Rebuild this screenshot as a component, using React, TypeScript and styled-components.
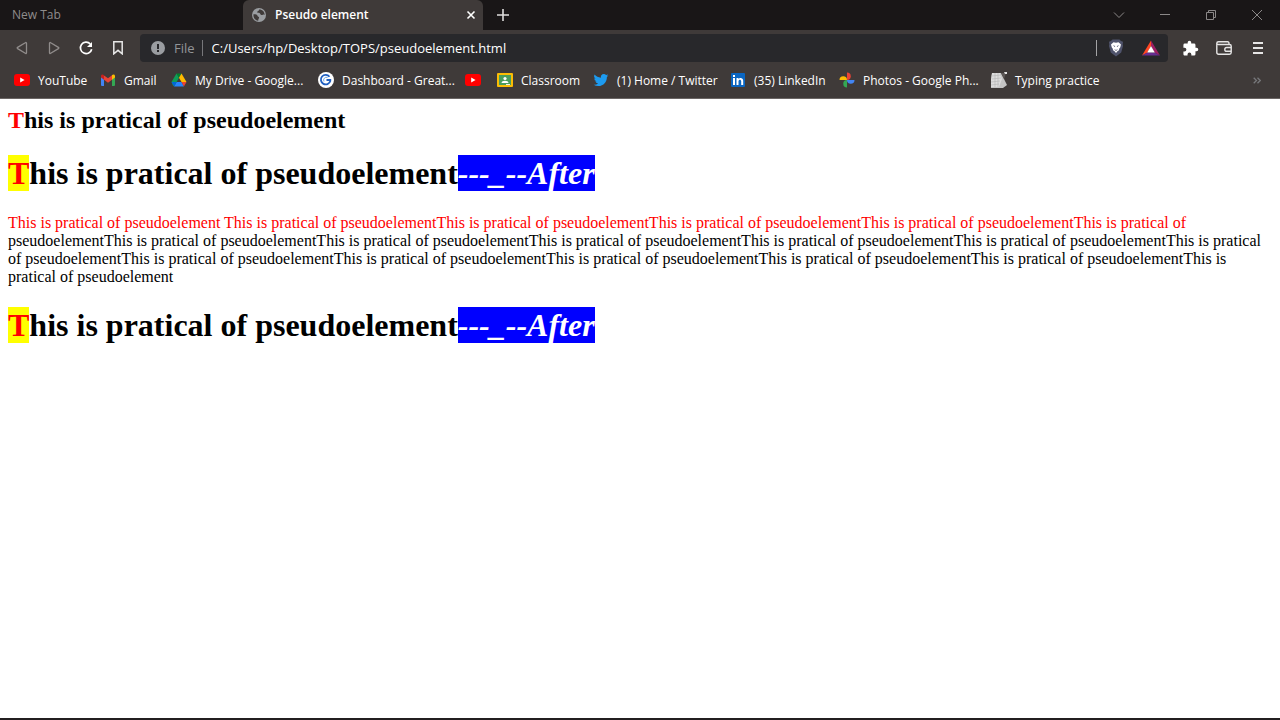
import React from "react";
import styled, { createGlobalStyle } from "styled-components";

const GlobalStyle = createGlobalStyle`
  *, *::before, *::after { box-sizing: border-box; }
  body { margin: 0; background: #fff; }
`;

const UI_FONT = `"Segoe UI", "Open Sans", "Noto Sans", sans-serif`;

const Window = styled.div`
  display: flex;
  flex-direction: column;
  min-height: 100vh;
`;

const BrowserChrome = styled.header`
  font-family: ${UI_FONT};
  font-size: 12px;
  color: #fff;
  background: #3f3a39;
  border-bottom: 1px solid #6b6665;
`;

const IconButton = styled.button<{ $width: number }>`
  display: flex;
  align-items: center;
  justify-content: center;
  flex: none;
  width: ${(p) => p.$width}px;
  height: 28px;
  padding: 0;
  border: 0;
  background: none;
  color: inherit;
`;

const TabStrip = styled.div`
  display: flex;
  align-items: center;
  height: 30px;
  background: #191617;
`;

const Tab = styled.div<{ $active?: boolean }>`
  display: flex;
  align-items: center;
  gap: 8px;
  flex: 0 1 ${(p) => (p.$active ? 240 : 243)}px;
  height: 30px;
  padding: 0 0 0 ${(p) => (p.$active ? 8 : 12)}px;
  border-radius: 6px 6px 0 0;
  background: ${(p) => (p.$active ? "#3f3a39" : "transparent")};
  color: ${(p) => (p.$active ? "#fff" : "#8f8c8c")};
  font-weight: ${(p) => (p.$active ? 600 : 400)};
  white-space: nowrap;
`;

const TabTitle = styled.span`
  flex: 1;
  padding-bottom: 1px;
`;

const WindowControls = styled.div`
  display: flex;
  margin-left: auto;
  color: #8b8888;
`;

const Toolbar = styled.div`
  display: flex;
  align-items: center;
  height: 36px;
  padding: 0 5px 0 6px;
`;

const NavButtons = styled.div`
  display: flex;
  flex: none;
  margin-right: 6px;
`;

const AddressBar = styled.div`
  display: flex;
  align-items: center;
  flex: 1;
  height: 28px;
  padding-left: 10px;
  border-radius: 4px;
  background: #28282b;
`;

const Scheme = styled.span`
  margin-left: 8px;
  padding-right: 7px;
  border-right: 1px solid #77777a;
  color: #929598;
  font-size: 13px;
  line-height: 16px;
`;

const AddressInput = styled.input`
  flex: 1;
  min-width: 0;
  padding: 0 9px;
  border: 0;
  outline: 0;
  background: none;
  color: #fff;
  font-family: inherit;
  font-size: 13px;
`;

const Divider = styled.span`
  width: 1px;
  height: 16px;
  margin-right: 2px;
  background: #a3a3a5;
`;

const Extensions = styled.div`
  display: flex;
  flex: none;
  margin-left: 5px;
  color: #e6e5e5;
`;

const BookmarkBar = styled.nav`
  display: flex;
  align-items: center;
  gap: 16px;
  height: 32px;
  padding: 0 6px 4px 14px;
`;

const Bookmark = styled.a`
  display: flex;
  align-items: center;
  flex: none;
  gap: 8px;
  color: inherit;
  text-decoration: none;
  white-space: nowrap;
`;

const BookmarkLabel = styled.span<{ $width: number }>`
  width: ${(p) => p.$width}px;
`;

const Overflow = styled.div`
  margin-left: auto;
  color: #77787b;
`;

const Document = styled.main`
  flex: 1;
  padding: 8px;
  color: #000;
  font-family: "Times New Roman", "Liberation Serif", serif;
  font-size: 16px;
  line-height: 18px;
`;

const SubHeading = styled.h2`
  margin: 0;
  font-size: 24px;
  line-height: 27px;
  &::first-letter { color: #f00; }
`;

const Heading = styled.h1`
  margin: 21px 0;
  font-size: 32px;
  line-height: 37px;
  &::first-letter { color: #f00; background: #ff0; }
`;

const After = styled.em`
  color: #fff;
  background: #00f;
`;

const Paragraph = styled.p`
  margin: 22px 0 21px;
  &::first-line { color: #f00; }
`;

const BottomEdge = styled.footer`
  height: 2px;
  background: #231f20;
`;

const YouTubeIcon = () => (
  <svg width="16" height="16" viewBox="0 0 16 16">
    <rect y="2" width="16" height="12" rx="3" fill="#f00" />
    <path d="M6.2 5.5v5L10.6 8z" fill="#fff" />
  </svg>
);

const GmailIcon = () => (
  <svg width="16" height="16" viewBox="0 0 16 16">
    <path d="M1 4v9a1 1 0 0 0 1 1h2V6.5z" fill="#4285f4" />
    <path d="M15 4v9a1 1 0 0 1-1 1h-2V6.5z" fill="#34a853" />
    <path d="M12 3.6V7.7l3-2.2V4c0-1.6-1.7-2.2-3-.9z" fill="#fbbc04" />
    <path d="M4 3.4v4.3l4 3 4-3V3.3L8 6.3z" fill="#ea4335" />
    <path d="M1 4v1.5l3 2.2V3.2C2.700 2 1 2.500 1 4z" fill="#c5221f" />
  </svg>
);

const DriveIcon = () => (
  <svg width="16" height="16" viewBox="0 0 16 16">
    <path d="M5.500 1.500 8 5.800 3.100 14.500 1.600 13 .5 10z" fill="#0f9d58" />
    <path d="M5.500 1.500h5L8 5.800z" fill="#00832d" />
    <path d="M10.500 1.500 15.500 10h-5L8 5.800z" fill="#ffba00" />
    <path d="M5.600 10h4.900l2.400 4.500H3.100z" fill="#2684fc" />
    <path d="M.5 10h5.100l-2.500 4.500z" fill="#0066da" />
    <path d="M10.500 10h5l-2.600 4.500z" fill="#ea4335" />
  </svg>
);

const GreatIcon = () => (
  <svg width="16" height="16" viewBox="0 0 16 16">
    <circle cx="8" cy="8" r="8" fill="#fff" />
    <path d="M11.500 4.700A4.800 4.800 0 1 0 12.300 9V8H8.500" fill="none" stroke="#1f5fc0" strokeWidth="1.800" />
    <path d="M9.500 5.500A2.800 2.800 0 0 0 6 9.500" fill="none" stroke="#6aa5e8" />
  </svg>
);

const ClassroomIcon = () => (
  <svg width="16" height="16" viewBox="0 0 16 16">
    <rect y="1" width="16" height="14" rx="1" fill="#fbbc04" />
    <rect x="2" y="3" width="12" height="10" fill="#4a9c5c" />
    <circle cx="8" cy="6.500" r="1.600" fill="#fff" />
    <path d="M4.500 11c0-3 7-3 7 0z" fill="#fff" />
    <path d="M9 12h4v1H9z" fill="#e8f1e9" />
  </svg>
);

const TwitterIcon = () => (
  <svg width="16" height="16" viewBox="-1 -1 26 26" fill="#1d9bf0">
    <path d="M23.950 4.570a10 10 0 0 1-2.820.770 4.960 4.960 0 0 0 2.160-2.720c-.950.550-2 .950-3.130 1.180a4.920 4.920 0 0 0-8.380 4.480C7.690 8.090 4.070 6.130 1.640 3.160a4.900 4.900 0 0 0 1.520 6.570 4.900 4.900 0 0 1-2.230-.610v.060a4.920 4.920 0 0 0 3.950 4.830 5 5 0 0 1-2.210.080 4.940 4.940 0 0 0 4.600 3.420A9.870 9.870 0 0 1 0 19.540a14 14 0 0 0 7.550 2.210c9.050 0 14-7.500 14-13.980l-.020-.640a9.900 9.900 0 0 0 2.420-2.560z" />
  </svg>
);

const LinkedInIcon = () => (
  <svg width="16" height="16" viewBox="0 0 16 16">
    <rect x="1" y="1" width="14" height="14" rx="1" fill="#0a66c2" />
    <path d="M3 6h2v7H3zM3 3h2v2H3zM6.500 6h2v1c1-1.700 4.700-1.700 4.700 1.800V13h-2V9.300c0-2.200-2.700-2.200-2.700 0V13h-2z" fill="#fff" />
  </svg>
);

const PhotosIcon = () => (
  <svg width="16" height="16" viewBox="0 0 16 16">
    <path d="M8 8V.5A3.750 3.750 0 0 1 8 8z" fill="#ea4335" />
    <path d="M8 8H.5A3.750 3.750 0 0 1 8 8z" fill="#fbbc04" />
    <path d="M8 8h7.500A3.750 3.750 0 0 1 8 8z" fill="#4285f4" />
    <path d="M8 8v7.500A3.750 3.750 0 0 1 8 8z" fill="#34a853" />
  </svg>
);

const TypingIcon = () => (
  <svg width="16" height="16" viewBox="0 0 16 16">
    <path d="M1 1h9l4 8 2 4-4 3H0V8z" fill="#c4c4c4" />
    <path d="M1 1h8l2 6-3 8H0V8z" fill="#dcdcdc" />
    <path d="M1 4l9-1M1 7l9-1M0 10l9-1M0 13l8-1M4 1v14M7 1v14" stroke="#b4b4b4" strokeWidth=".6" />
    <path d="M10 1l5 0-2 6z" fill="#5d5857" />
    <path d="M13 0h3v2h-2z" fill="#e4e4e4" />
  </svg>
);

const GlobeIcon = () => (
  <svg width="16" height="16" viewBox="0 0 16 16">
    <circle cx="8" cy="8" r="7" fill="#9a9da1" />
    <path d="M2.500 7.200c2 0 3.600.3 4 1.500.4 1.400 1.600.7 1.600 1.800 0 1-.9 1.200-.9 3.300C4 13.500 2 10.500 2.500 7.200zM8.200 2.500c-.2 1.700-2.200 1.300-2 2.800.1 1 2.600.2 3 1.500.3 1.200 1.700 1.500 2.600 1 .8-.5 1.400-.3 1.800.200.1-2.800-1.700-5-4.300-5.500z" fill="#3f3a39" />
  </svg>
);

const InfoIcon = () => (
  <svg width="16" height="16" viewBox="0 0 16 16">
    <circle cx="8" cy="8" r="7" fill="#9a9da1" />
    <path d="M7 4h2v5H7zM7 10h2v2H7z" fill="#28282b" />
  </svg>
);

const CloseIcon = () => (
  <svg width="10" height="10" viewBox="0 0 10 10">
    <path d="M1.500 1.500l7 7M8.500 1.500l-7 7" stroke="#fff" strokeWidth="1.600" />
  </svg>
);

const PlusIcon = () => (
  <svg width="12" height="12" viewBox="0 0 12 12">
    <path d="M6 0v12M0 6h12" stroke="#dedddd" strokeWidth="1.600" />
  </svg>
);

const ChevronIcon = () => (
  <svg width="12" height="12" viewBox="0 0 12 12">
    <path d="M1 3.500l5 5 5-5" fill="none" stroke="currentColor" />
  </svg>
);

const MinimizeIcon = () => (
  <svg width="10" height="10" viewBox="0 0 10 10">
    <path d="M0 4.500h10" stroke="currentColor" />
  </svg>
);

const RestoreIcon = () => (
  <svg width="10" height="10" viewBox="0 0 10 10" fill="none" stroke="currentColor">
    <path d="M.5 2.500h7v7h-7zM2.500 2.500v-2h7v7h-2" />
  </svg>
);

const QuitIcon = () => (
  <svg width="10" height="10" viewBox="0 0 10 10">
    <path d="M0 0l10 10M10 0L0 10" stroke="currentColor" />
  </svg>
);

const TriangleIcon = ({ flip }: { flip?: boolean }) => (
  <svg width="12" height="14" viewBox="0 0 12 14">
    <path
      d={flip ? "M1.500 2.200v9.600c0 .8.600 1 1.200.5l7.700-4.700c.6-.4.6-.8 0-1.200L2.700 1.700c-.6-.4-1.200-.2-1.200.5z" : "M10.500 2.200v9.600c0 .8-.6 1-1.200.5L1.600 7.600c-.6-.4-.6-.8 0-1.200l7.700-4.700c.6-.4 1.200-.2 1.200.5z"}
      fill="none"
      stroke="#908c8b"
      strokeWidth="1.300"
    />
  </svg>
);

const ReloadIcon = () => (
  <svg width="16" height="16" viewBox="0 0 16 16">
    <path d="M12.300 4A5.700 5.700 0 1 0 13.700 9.200" fill="none" stroke="#fff" strokeWidth="1.700" />
    <path d="M14 2v5H9z" fill="#fff" />
  </svg>
);

const BookmarkIcon = () => (
  <svg width="12" height="14" viewBox="0 0 12 14">
    <path d="M1.800.800h8.400v12L6 9.300l-4.200 3.500z" fill="none" stroke="#e8e7e7" strokeWidth="1.500" />
  </svg>
);

const BraveIcon = () => (
  <svg width="16" height="18" viewBox="0 0 16 18">
    <path d="M4.500.5h7L13 2l2 .8-.3 2.700.3 1.500-1.800 6.500L8 17.500l-5.200-4L1 7l.3-1.500L1 2.800 3 2z" fill="#50546c" />
    <path d="M5.500 3.200l2.500.5 2.500-.5L13 5.500l-.8 3-1 1.300-.2 1.500-1.300.7L8 14l-1.700-2-1.300-.7-.2-1.500-1-1.300-.8-3z" fill="#fff" />
    <path d="M4.800 6.300l2.400.6-.4 1.200zM11.200 6.300l-2.400.6.4 1.200zM6 10l2 1 2-1-2 2z" fill="#50546c" />
  </svg>
);

const BatIcon = () => (
  <svg width="18" height="16" viewBox="0 0 18 16">
    <path d="M9 .5L0 15.500l5.500-3L9 6z" fill="#ff4724" />
    <path d="M9 .5l9 15-5.500-3L9 6z" fill="#9e1f63" />
    <path d="M0 15.500h18l-5.500-3h-7z" fill="#662d91" />
    <path d="M9 6l3.800 6.600H5.200z" fill="#fff" />
  </svg>
);

const PuzzleIcon = () => (
  <svg width="17" height="17" viewBox="0 0 24 24" fill="#fff">
    <path d="M20.500 11H19V7a2 2 0 0 0-2-2h-4V3.500a2.500 2.500 0 0 0-5 0V5H4a2 2 0 0 0-2 2v3.800h1.500a2.700 2.700 0 0 1 0 5.400H2V20c0 1.100.9 2 2 2h3.800v-1.500a2.700 2.700 0 0 1 5.400 0V22H17a2 2 0 0 0 2-2v-4h1.500a2.500 2.500 0 0 0 0-5z" />
  </svg>
);

const WalletIcon = () => (
  <svg width="16" height="14" viewBox="0 0 16 14" fill="none" stroke="#e6e5e5" strokeWidth="1.400">
    <path d="M13 3.500V2.200c0-.8-.5-1.400-1.300-1.400H2.500C1.500.8.8 1.500.8 2.300S1.500 3.500 2.500 3.500h11c1 0 1.700.6 1.700 1.500v6.500c0 1-.7 1.700-1.700 1.700h-11c-1 0-1.700-.7-1.700-1.700V2.300" />
    <path d="M15.200 6.500h-4.500a1.900 1.900 0 0 0 0 3.800h4.500" />
  </svg>
);

const MenuIcon = () => (
  <svg width="10" height="12" viewBox="0 0 10 12">
    <path d="M0 1h10M0 6h10M0 11h10" stroke="#e6e5e5" strokeWidth="2" />
  </svg>
);

const MoreIcon = () => (
  <svg width="8" height="7" viewBox="0 0 8 7">
    <path d="M.7.7l2.800 2.800L.7 6.300M4.500.7l2.800 2.800-2.800 2.800" fill="none" stroke="currentColor" strokeWidth="1.300" />
  </svg>
);

const bookmarks = [
  { label: "YouTube", width: 46, Icon: YouTubeIcon },
  { label: "Gmail", width: 31, Icon: GmailIcon },
  { label: "My Drive - Google...", width: 107, Icon: DriveIcon },
  { label: "Dashboard - Great...", width: 107, Icon: GreatIcon },
  { label: "", width: 0, Icon: YouTubeIcon },
  { label: "Classroom", width: 56, Icon: ClassroomIcon },
  { label: "(1) Home / Twitter", width: 97, Icon: TwitterIcon },
  { label: "(35) LinkedIn", width: 69, Icon: LinkedInIcon },
  { label: "Photos - Google Ph...", width: 112, Icon: PhotosIcon },
  { label: "Typing practice", width: 80, Icon: TypingIcon },
];

const PHRASE = "This is pratical of pseudoelement";

const AfterHeading = () => (
  <Heading>
    {PHRASE}
    <After>---_--After</After>
  </Heading>
);

export default function App() {
  return (
    <Window>
      <GlobalStyle />
      <BrowserChrome>
        <TabStrip>
          <Tab>
            <TabTitle>New Tab</TabTitle>
          </Tab>
          <Tab $active>
            <GlobeIcon />
            <TabTitle>Pseudo element</TabTitle>
            <IconButton $width={24} aria-label="Close tab"><CloseIcon /></IconButton>
          </Tab>
          <IconButton $width={40} aria-label="Open new tab"><PlusIcon /></IconButton>
          <WindowControls>
            <IconButton $width={46} aria-label="Search tabs"><ChevronIcon /></IconButton>
            <IconButton $width={46} aria-label="Minimize"><MinimizeIcon /></IconButton>
            <IconButton $width={46} aria-label="Restore"><RestoreIcon /></IconButton>
            <IconButton $width={46} aria-label="Close window"><QuitIcon /></IconButton>
          </WindowControls>
        </TabStrip>
        <Toolbar>
          <NavButtons>
            <IconButton $width={32} aria-label="Back"><TriangleIcon /></IconButton>
            <IconButton $width={32} aria-label="Forward"><TriangleIcon flip /></IconButton>
            <IconButton $width={32} aria-label="Reload"><ReloadIcon /></IconButton>
            <IconButton $width={32} aria-label="Bookmark this page"><BookmarkIcon /></IconButton>
          </NavButtons>
          <AddressBar>
            <InfoIcon />
            <Scheme>File</Scheme>
            <AddressInput aria-label="Address" defaultValue="C:/Users/hp/Desktop/TOPS/pseudoelement.html" />
            <Divider />
            <IconButton $width={34} aria-label="Shields"><BraveIcon /></IconButton>
            <IconButton $width={35} aria-label="Rewards"><BatIcon /></IconButton>
          </AddressBar>
          <Extensions>
            <IconButton $width={34} aria-label="Extensions"><PuzzleIcon /></IconButton>
            <IconButton $width={34} aria-label="Wallet"><WalletIcon /></IconButton>
            <IconButton $width={34} aria-label="Menu"><MenuIcon /></IconButton>
          </Extensions>
        </Toolbar>
        <BookmarkBar>
          {bookmarks.map(({ label, width, Icon }, i) => (
            <Bookmark key={i} href="#" aria-label={label || "YouTube"}>
              <Icon />
              {label && <BookmarkLabel $width={width}>{label}</BookmarkLabel>}
            </Bookmark>
          ))}
          <Overflow>
            <IconButton $width={34} aria-label="More bookmarks"><MoreIcon /></IconButton>
          </Overflow>
        </BookmarkBar>
      </BrowserChrome>
      <Document>
        <SubHeading>{PHRASE}</SubHeading>
        <AfterHeading />
        <Paragraph>{PHRASE + " " + PHRASE.repeat(17)}</Paragraph>
        <AfterHeading />
      </Document>
      <BottomEdge />
    </Window>
  );
}
